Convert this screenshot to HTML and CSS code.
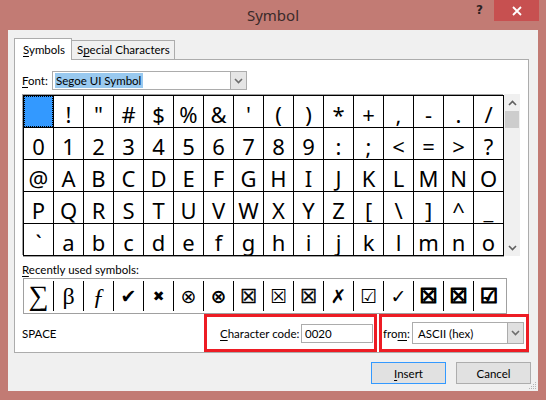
FILE: index.html
```html
<!DOCTYPE html>
<html>
<head>
<meta charset="utf-8">
<link rel="stylesheet" href="styles.css">
</head>
<body>
<div class="window">
  <div class="titlebar">
    <div class="tb-spacer"></div>
    <div class="title">Symbol</div>
    <div class="controls">
      <span class="help">?</span>
      <span class="close"><svg width="10" height="10" viewBox="0 0 10 10"><path d="M1 1L9 9M9 1L1 9" stroke="#fff" stroke-width="1.8"/></svg></span>
    </div>
  </div>
  <div class="client">
    <div class="tabs">
      <div class="tab active"><u>S</u>ymbols</div>
      <div class="tab">S<u>p</u>ecial Characters</div>
    </div>
    <div class="panel">
      <div class="font-row">
        <span class="lbl"><u>F</u>ont:</span>
        <div class="combo font-combo">
          <span class="sel">Segoe UI Symbol</span>
          <span class="arrow"><svg width="9" height="6" viewBox="0 0 9 6"><path d="M1 1L4.5 4.5L8 1" fill="none" stroke="#6d6d6d" stroke-width="1.6"/></svg></span>
        </div>
      </div>
      <div class="grid-wrap">
        <div class="grid">
          <div class="cell selected"></div><div class="cell">!</div><div class="cell">"</div><div class="cell">#</div><div class="cell">$</div><div class="cell">%</div><div class="cell">&amp;</div><div class="cell">'</div><div class="cell">(</div><div class="cell">)</div><div class="cell">*</div><div class="cell">+</div><div class="cell">,</div><div class="cell">-</div><div class="cell">.</div><div class="cell">/</div>
          <div class="cell">0</div><div class="cell">1</div><div class="cell">2</div><div class="cell">3</div><div class="cell">4</div><div class="cell">5</div><div class="cell">6</div><div class="cell">7</div><div class="cell">8</div><div class="cell">9</div><div class="cell">:</div><div class="cell">;</div><div class="cell">&lt;</div><div class="cell">=</div><div class="cell">&gt;</div><div class="cell">?</div>
          <div class="cell">@</div><div class="cell">A</div><div class="cell">B</div><div class="cell">C</div><div class="cell">D</div><div class="cell">E</div><div class="cell">F</div><div class="cell">G</div><div class="cell">H</div><div class="cell">I</div><div class="cell">J</div><div class="cell">K</div><div class="cell">L</div><div class="cell">M</div><div class="cell">N</div><div class="cell">O</div>
          <div class="cell">P</div><div class="cell">Q</div><div class="cell">R</div><div class="cell">S</div><div class="cell">T</div><div class="cell">U</div><div class="cell">V</div><div class="cell">W</div><div class="cell">X</div><div class="cell">Y</div><div class="cell">Z</div><div class="cell">[</div><div class="cell">\</div><div class="cell">]</div><div class="cell">^</div><div class="cell">_</div>
          <div class="cell">`</div><div class="cell">a</div><div class="cell">b</div><div class="cell">c</div><div class="cell">d</div><div class="cell">e</div><div class="cell">f</div><div class="cell">g</div><div class="cell">h</div><div class="cell">i</div><div class="cell">j</div><div class="cell">k</div><div class="cell">l</div><div class="cell">m</div><div class="cell">n</div><div class="cell">o</div>
        </div>
        <div class="scrollbar">
          <span class="sb-btn"><svg width="9" height="6" viewBox="0 0 9 6"><path d="M1 5L4.5 1.5L8 5" fill="none" stroke="#606060" stroke-width="1.6"/></svg></span>
          <span class="thumb"></span>
          <span class="sb-track"></span>
          <span class="sb-btn"><svg width="9" height="6" viewBox="0 0 9 6"><path d="M1 1L4.5 4.5L8 1" fill="none" stroke="#606060" stroke-width="1.6"/></svg></span>
        </div>
      </div>
      <div class="recent-label"><u>R</u>ecently used symbols:</div>
      <div class="recent">
        <div class="rc serif big">∑</div>
        <div class="rc serif">β</div>
        <div class="rc serif ital">ƒ</div>
        <div class="rc sym">✔</div>
        <div class="rc sym small">✖</div>
        <div class="rc sym">⊗</div>
        <div class="rc sym boldish">⊗</div>
        <div class="rc sym medium">☒</div>
        <div class="rc sym">☒</div>
        <div class="rc sym medium">☒</div>
        <div class="rc sym">✗</div>
        <div class="rc sym">☑</div>
        <div class="rc sym">✓</div>
        <div class="rc sym heavy">☒</div>
        <div class="rc sym heavy">☒</div>
        <div class="rc sym heavy">☑</div>
      </div>
      <div class="bottom-row">
        <div class="charname">SPACE</div>
        <div class="redbox code-box">
          <span class="lbl"><u>C</u>haracter code:</span>
          <div class="input">0020</div>
        </div>
        <div class="redbox from-box">
          <span class="lbl">fro<u>m</u>:</span>
          <div class="combo from-combo">
            <span class="val">ASCII (hex)</span>
            <span class="arrow"><svg width="9" height="6" viewBox="0 0 9 6"><path d="M1 1L4.5 4.5L8 1" fill="none" stroke="#6d6d6d" stroke-width="1.6"/></svg></span>
          </div>
        </div>
      </div>
    </div>
    <div class="buttons">
      <button class="btn default"><u>I</u>nsert</button>
      <button class="btn">Cancel</button>
    </div>
    <svg class="grip" width="8" height="8" viewBox="0 0 8 8"><g fill="#b5b5b5"><rect x="6" y="0" width="1" height="1"/><rect x="4" y="2" width="1" height="1"/><rect x="6" y="2" width="1" height="1"/><rect x="2" y="4" width="1" height="1"/><rect x="4" y="4" width="1" height="1"/><rect x="6" y="4" width="1" height="1"/><rect x="0" y="6" width="1" height="1"/><rect x="2" y="6" width="1" height="1"/><rect x="4" y="6" width="1" height="1"/><rect x="6" y="6" width="1" height="1"/></g></svg>
  </div>
</div>
</body>
</html>
```
FILE: styles.css
```css
* { box-sizing: border-box; }
html, body { margin: 0; padding: 0; }
body {
  width: 546px;
  height: 400px;
  overflow: hidden;
  font-family: "Lato", "Noto Sans", sans-serif;
  font-size: 11.5px;
  color: #000;
  white-space: nowrap;
}
u { text-decoration: underline; text-underline-offset: 2px; }
.window {
  width: 546px;
  height: 400px;
  background: #c27b74;
  display: flex;
  flex-direction: column;
}
.titlebar {
  height: 30px;
  display: grid;
  grid-template-columns: 1fr auto 1fr;
  align-items: start;
}
.title {
  font-family: "Noto Sans", sans-serif;
  font-size: 15px;
  line-height: 30px;
  color: #3a2a2a;
}
.controls {
  display: flex;
  justify-content: flex-end;
  align-items: flex-start;
  margin-right: 7px;
}
.help {
  font-family: "DejaVu Sans", sans-serif;
  font-weight: bold;
  font-size: 12px;
  line-height: 21px;
  color: #2b2222;
  margin-right: 11px;
}
.close {
  width: 45px;
  height: 21px;
  background: #c75050;
  display: flex;
  align-items: center;
  justify-content: center;
}
.client {
  position: relative;
  flex: 1;
  margin: 0 8px 9px 8px;
  background: #f0f0f0;
  padding: 8px 9px 0 6px;
  display: flex;
  flex-direction: column;
}
.tabs {
  display: flex;
  align-items: flex-end;
  height: 22px;
  margin-bottom: -1px;
  position: relative;
  z-index: 1;
}
.tab {
  border: 1px solid #acacac;
  border-bottom: none;
  height: 19px;
  line-height: 18px;
  padding: 0 0 0 5px;
  background: #f0f0f0;
  margin-bottom: 1px;
}
.tab.active {
  background: #fff;
  height: 22px;
  line-height: 21px;
  width: 58px;
  padding: 0 0 0 8px;
  margin-bottom: 0;
}
.tab + .tab { border-left: none; width: 103px; }
.panel {
  background: #fff;
  border: 1px solid #acacac;
  height: 294px;
  padding: 11px 7px 0 7px;
  display: flex;
  flex-direction: column;
}
.font-row {
  display: flex;
  align-items: center;
  height: 19px;
}
.font-row .lbl { width: 30px; }
.combo {
  display: flex;
  align-items: center;
  border: 1px solid #acacac;
  background: #fff;
}
.font-combo {
  width: 195px;
  height: 19px;
  padding-left: 2px;
}
.font-combo .sel {
  background: #99c9ef;
  line-height: 15px;
  padding: 0 2px 0 1px;
}
.arrow {
  margin-left: auto;
  width: 16px;
  height: 100%;
  background: #e5e5e5;
  border-left: 1px solid #acacac;
  display: flex;
  align-items: center;
  justify-content: center;
}
.grid-wrap {
  display: flex;
  margin-top: 4px;
  margin-left: 1px;
}
.grid {
  display: grid;
  grid-template-columns: repeat(16, 29px);
  grid-template-rows: repeat(5, 31px);
  gap: 1px;
  background: #000;
  border: 1px solid #000;
  box-shadow: -1px -1px 0 #a0a0a0, 0 1px 0 #a0a0a0;
  margin-top: 1px;
}
.cell {
  background: #fff;
  text-align: center;
  font-family: "Noto Sans", sans-serif;
  font-size: 22px;
  line-height: 36px;
  color: #000;
}
.cell.selected {
  background: #3399ff;
  outline: 1px dotted #000;
  outline-offset: -1px;
}
.scrollbar {
  width: 16px;
  background: #f0f0f0;
  display: flex;
  flex-direction: column;
  height: 162px;
}
.sb-btn {
  height: 17px;
  display: flex;
  align-items: center;
  justify-content: center;
}
.thumb {
  height: 17px;
  margin: 0 1px;
  background: #cdcdcd;
}
.sb-track { flex: 1; }
.recent-label {
  margin-top: 6px;
  line-height: 15px;
  height: 15px;
}
.recent {
  display: flex;
  margin-top: 1px;
  margin-left: 1px;
  width: 484px;
  height: 36px;
  border: 1px solid #a0a0a0;
  padding: 2px 0;
}
.rc {
  width: 30px;
  border-right: 1px solid #000;
  display: flex;
  align-items: center;
  justify-content: center;
  font-size: 18px;
}
.rc:last-child { border-right: none; }
.serif { font-family: "Liberation Serif", "DejaVu Serif", serif; font-size: 24px; }
.big { font-size: 28px; }
.ital { font-style: italic; }
.sym { font-family: "DejaVu Sans", sans-serif; font-size: 19px; }
.small { font-size: 14px; }
.boldish { font-weight: bold; }
.medium { -webkit-text-stroke: 0.5px #000; }
.heavy { -webkit-text-stroke: 1.2px #000; font-size: 20px; }
.bottom-row {
  display: flex;
  align-items: stretch;
  height: 38px;
  margin-right: -8px;
}
.charname {
  align-self: center;
  flex: 1;
}
.redbox {
  border: 3px solid #ed1c24;
  display: flex;
  align-items: center;
}
.code-box {
  width: 173px;
  padding-left: 13px;
}
.code-box .lbl { width: 81px; }
.input {
  width: 72px;
  height: 19px;
  border: 1px solid #acacac;
  background: #fff;
  line-height: 17px;
  padding-left: 3px;
}
.from-box {
  width: 150px;
  margin-left: 2px;
  padding-left: 1px;
}
.from-box .lbl { width: 29px; }
.from-combo {
  width: 112px;
  height: 22px;
  padding-left: 5px;
}
.from-combo .arrow { background: #e0e0e0; }
.buttons {
  display: flex;
  justify-content: flex-end;
  gap: 10px;
  margin-top: 9px;
  margin-right: -2px;
}
.btn {
  width: 75px;
  height: 22px;
  font-family: inherit;
  font-size: 11.5px;
  background: #e1e1e1;
  border: 1px solid #adadad;
  padding: 0;
  color: #000;
}
.btn.default { border-color: #3399ff; }
.grip {
  position: absolute;
  right: 1px;
  bottom: 1px;
}
```
